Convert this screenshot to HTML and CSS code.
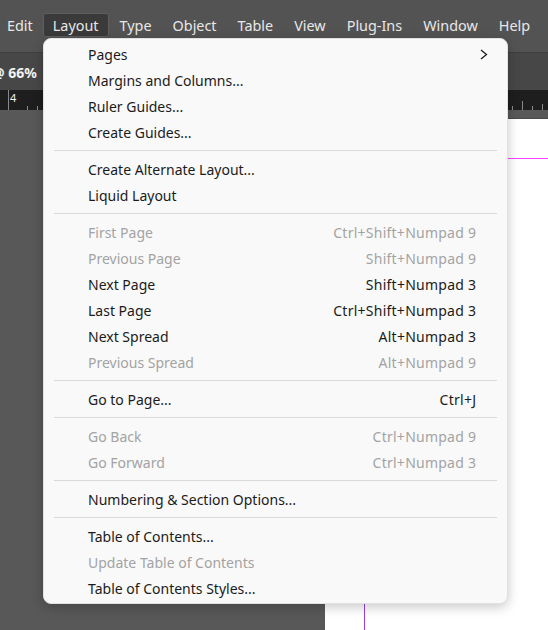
FILE: index.html
```html
<!DOCTYPE html>
<html lang="en">
<head>
<meta charset="utf-8">
<title>Layout menu</title>
<link rel="stylesheet" href="styles.css">
</head>
<body>
<div class="app">
  <nav class="menubar">
    <span class="mi first">Edit</span>
    <span class="mi active">Layout</span>
    <span class="mi">Type</span>
    <span class="mi">Object</span>
    <span class="mi">Table</span>
    <span class="mi">View</span>
    <span class="mi">Plug-Ins</span>
    <span class="mi">Window</span>
    <span class="mi">Help</span>
  </nav>
  <div class="controlbar"><span class="zoomlevel">@ 66%</span></div>
  <div class="ruler">
    <svg class="ruler-svg" width="548" height="20" viewBox="0 0 548 20">
      <g stroke="#8a8a8a" stroke-width="1">
        <line x1="8.5" y1="0" x2="8.5" y2="20"/>
        <line x1="27.5" y1="16" x2="27.5" y2="20"/>
        <line x1="37.5" y1="16" x2="37.5" y2="20"/>
        <line x1="512.5" y1="16" x2="512.5" y2="20"/>
        <line x1="522.5" y1="11" x2="522.5" y2="20"/>
        <line x1="532.5" y1="16" x2="532.5" y2="20"/>
        <line x1="542.5" y1="14" x2="542.5" y2="20"/>
      </g>
    </svg>
    <span class="ruler-label">4</span>
  </div>
  <div class="pasteboard">
    <div class="page">
      <div class="guide-h"></div>
      <div class="guide-v"></div>
    </div>
  </div>

  <div class="menu">
    <div class="row"><span>Pages</span><svg class="chev" width="8" height="11" viewBox="0 0 8 11"><path d="M1 1 L6.5 5.5 L1 10" fill="none" stroke="#1b1b1b" stroke-width="1.3"/></svg></div>
    <div class="row"><span>Margins and Columns...</span></div>
    <div class="row"><span>Ruler Guides...</span></div>
    <div class="row"><span>Create Guides...</span></div>
    <div class="sep"></div>
    <div class="row"><span>Create Alternate Layout...</span></div>
    <div class="row"><span>Liquid Layout</span></div>
    <div class="sep"></div>
    <div class="row off"><span>First Page</span><span class="key">Ctrl+Shift+Numpad 9</span></div>
    <div class="row off"><span>Previous Page</span><span class="key">Shift+Numpad 9</span></div>
    <div class="row"><span>Next Page</span><span class="key">Shift+Numpad 3</span></div>
    <div class="row"><span>Last Page</span><span class="key">Ctrl+Shift+Numpad 3</span></div>
    <div class="row"><span>Next Spread</span><span class="key">Alt+Numpad 3</span></div>
    <div class="row off"><span>Previous Spread</span><span class="key">Alt+Numpad 9</span></div>
    <div class="sep"></div>
    <div class="row"><span>Go to Page...</span><span class="key">Ctrl+J</span></div>
    <div class="sep"></div>
    <div class="row off"><span>Go Back</span><span class="key">Ctrl+Numpad 9</span></div>
    <div class="row off"><span>Go Forward</span><span class="key">Ctrl+Numpad 3</span></div>
    <div class="sep"></div>
    <div class="row"><span>Numbering &amp; Section Options...</span></div>
    <div class="sep"></div>
    <div class="row"><span>Table of Contents...</span></div>
    <div class="row off"><span>Update Table of Contents</span></div>
    <div class="row"><span>Table of Contents Styles...</span></div>
  </div>
</div>
</body>
</html>
```

FILE: styles.css
```css
html, body {
  margin: 0;
  padding: 0;
}

body {
  font-family: "Noto Sans", "Open Sans", sans-serif;
  background: #585858;
}

.app {
  position: relative;
  width: 548px;
  height: 630px;
  overflow: hidden;
  display: flex;
  flex-direction: column;
}

.menubar {
  height: 52px;
  box-sizing: border-box;
  padding-top: 13px;
  background: #535353;
  display: flex;
  gap: 1px;
  white-space: nowrap;
}

.mi {
  height: 24px;
  box-sizing: border-box;
  padding: 1px 9px 0;
  border: 1px solid transparent;
  border-radius: 3px;
  color: #e8e8e8;
  font-size: 14.4px;
  line-height: 21px;
}

.mi.first {
  margin-left: -3px;
}

.mi.active {
  margin-left: -1px;
  background: #3a3a3a;
  border-color: #5e5e5e;
}

.controlbar {
  height: 38px;
  box-sizing: border-box;
  background: #474747;
  border-top: 1px solid #3f3f3f;
  display: flex;
  align-items: center;
}

.zoomlevel {
  margin-left: -8px;
  color: #f2f2f2;
  font-weight: 700;
  font-size: 14px;
  padding-top: 2px;
}

.ruler {
  position: relative;
  height: 20px;
  background: #1e1e1e;
}

.ruler-svg {
  display: block;
}

.ruler-label {
  position: absolute;
  left: 10px;
  top: 2px;
  color: #f0f0f0;
  font-size: 11px;
  line-height: 12px;
}

.pasteboard {
  position: relative;
  flex: 1;
  background: #585858;
}

.page {
  position: absolute;
  left: 325px;
  top: 8px;
  right: 0;
  bottom: 0;
  background: #ffffff;
  border-top: 1px solid #4a4a4a;
}

.guide-h {
  position: absolute;
  left: 39px;
  right: 0;
  top: 39px;
  height: 1px;
  background: #ff40ff;
}

.guide-v {
  position: absolute;
  left: 39px;
  top: 39px;
  bottom: 0;
  width: 1px;
  background: #9a3fe0;
}

.menu {
  position: absolute;
  left: 43px;
  top: 38px;
  width: 465px;
  box-sizing: border-box;
  padding: 2px 0 2px;
  background: #f9f9f9;
  border: 1px solid #e2e2e2;
  border-radius: 8px;
  box-shadow: 0 3px 12px rgba(0, 0, 0, 0.22);
}

.row {
  height: 26px;
  box-sizing: border-box;
  padding: 0 31px 0 44px;
  display: flex;
  align-items: center;
  justify-content: space-between;
  color: #1b1b1b;
  font-size: 14px;
  white-space: nowrap;
}

.row.off {
  color: #a3a3a3;
}

.key {
  letter-spacing: 0.25px;
  margin-right: -0.25px;
}

.chev {
  display: block;
  margin-right: -12px;
}

.sep {
  height: 1px;
  margin: 5px 10px 5px 10px;
  background: #dadada;
}
```
